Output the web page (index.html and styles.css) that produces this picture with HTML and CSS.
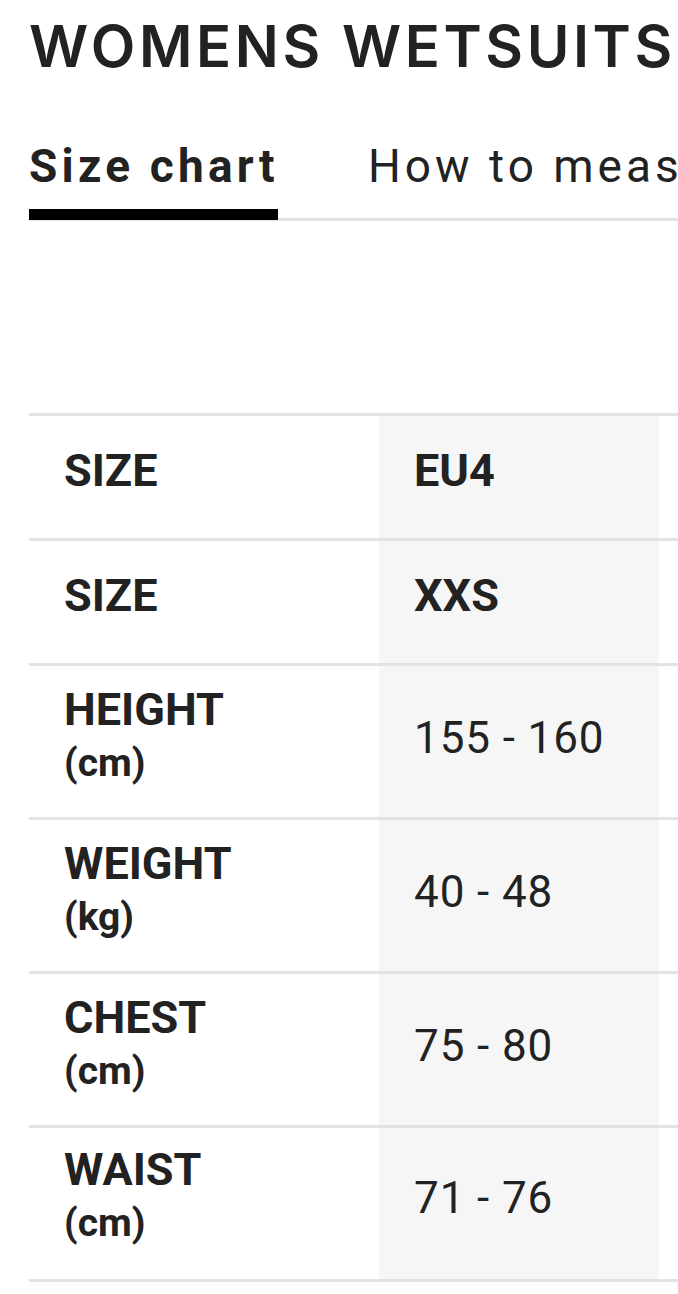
FILE: index.html
```html
<!DOCTYPE html>
<html lang="en">
<head>
<meta charset="utf-8">
<title>Womens Wetsuits – Size chart</title>
<link rel="stylesheet" href="styles.css">
</head>
<body>
<main class="page">
  <h1 class="title">WOMENS WETSUITS</h1>
  <nav class="tabs">
    <div class="tab tab-active">Size chart</div>
    <div class="tab">How to measure</div>
  </nav>
  <div class="chart">
    <div class="cell label single">SIZE</div>
    <div class="cell value alt strong single">EU4</div>
    <div class="cell value single"></div>

    <div class="cell label single">SIZE</div>
    <div class="cell value alt strong single">XXS</div>
    <div class="cell value single"></div>

    <div class="cell label double">HEIGHT<span class="unit">(cm)</span></div>
    <div class="cell value alt double">155 - 160</div>
    <div class="cell value double"></div>

    <div class="cell label double">WEIGHT<span class="unit">(kg)</span></div>
    <div class="cell value alt double">40 - 48</div>
    <div class="cell value double"></div>

    <div class="cell label double">CHEST<span class="unit">(cm)</span></div>
    <div class="cell value alt double">75 - 80</div>
    <div class="cell value double"></div>

    <div class="cell label double last">WAIST<span class="unit">(cm)</span></div>
    <div class="cell value alt double last">71 - 76</div>
    <div class="cell value double last"></div>
  </div>
</main>
</body>
</html>
```

FILE: styles.css
```css
html, body {
  margin: 0;
  padding: 0;
  background: #fff;
  overflow: hidden;
}

body {
  font-family: Roboto, "Liberation Sans", sans-serif;
  color: #222;
  width: 678px;
}

.page {
  padding-left: 29px;
  width: 1000px;
}

.title {
  font-family: Inter, "Liberation Sans", sans-serif;
  font-weight: 600;
  font-size: 58px;
  line-height: 58px;
  letter-spacing: 3.6px;
  margin: 17px 0 0;
  white-space: nowrap;
}

.tabs {
  display: flex;
  gap: 90px;
  margin-top: 64px;
  border-bottom: 3px solid #e2e2e2;
  width: 649px;
  white-space: nowrap;
}

.tab {
  position: relative;
  flex-shrink: 0;
  font-size: 46px;
  line-height: 54px;
  letter-spacing: 4px;
  padding-bottom: 25px;
}

.tab-active {
  font-weight: 700;
  letter-spacing: 4.2px;
  width: 249px;
}

.tab-active::after {
  content: "";
  position: absolute;
  left: 0;
  right: 0;
  bottom: -2px;
  height: 11px;
  background: #000;
}

.chart {
  display: grid;
  grid-template-columns: 350px 280px 300px;
  margin-top: 192px;
}

.cell {
  box-sizing: border-box;
  border-top: 3px solid #e3e3e3;
  padding: 0 35px 13px 35px;
  display: flex;
  flex-direction: column;
  justify-content: center;
  white-space: nowrap;
}

.single { height: 125px; }
.double { height: 154px; padding-bottom: 8px; }
.last { border-bottom: 3px solid #e3e3e3; height: 157px; padding-bottom: 11px; }

.alt { background: #f6f6f6; }

.label {
  font-weight: 700;
  font-size: 45px;
  line-height: 50px;
}

.unit {
  display: block;
  font-size: 39px;
  line-height: 56px;
}

.value {
  font-size: 44px;
  line-height: 50px;
  letter-spacing: 0.9px;
}

.strong {
  font-weight: 700;
  font-size: 45px;
  letter-spacing: 0;
}
```
